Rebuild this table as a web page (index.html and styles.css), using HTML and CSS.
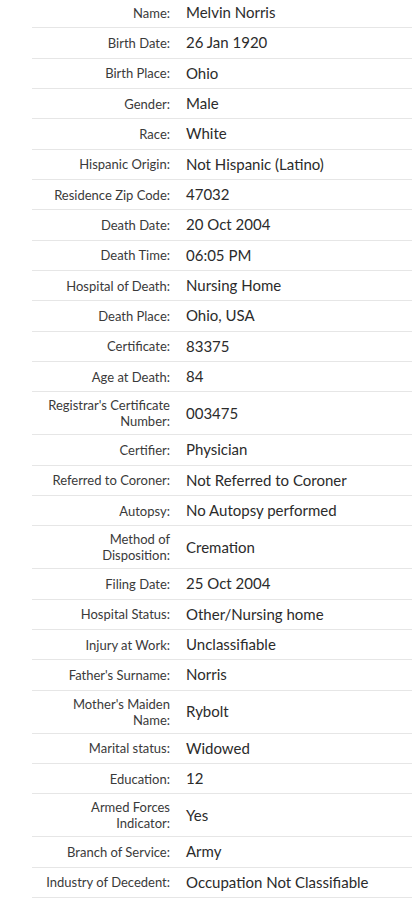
FILE: index.html
```html
<!DOCTYPE html>
<html lang="en">
<head>
    <meta charset="UTF-8">
    <meta name="viewport" content="width=device-width, initial-scale=1.0">
    <title>Death Record</title>
    <link rel="stylesheet" href="styles.css">
</head>
<body>
    <div class="record">
        <table class="record-table">
            <tr><td class="label">Name:</td><td class="value">Melvin Norris</td></tr>
            <tr><td class="label">Birth Date:</td><td class="value">26 Jan 1920</td></tr>
            <tr><td class="label">Birth Place:</td><td class="value">Ohio</td></tr>
            <tr><td class="label">Gender:</td><td class="value">Male</td></tr>
            <tr><td class="label">Race:</td><td class="value">White</td></tr>
            <tr><td class="label">Hispanic Origin:</td><td class="value">Not Hispanic (Latino)</td></tr>
            <tr><td class="label">Residence Zip Code:</td><td class="value">47032</td></tr>
            <tr><td class="label">Death Date:</td><td class="value">20 Oct 2004</td></tr>
            <tr><td class="label">Death Time:</td><td class="value">06:05 PM</td></tr>
            <tr><td class="label">Hospital of Death:</td><td class="value">Nursing Home</td></tr>
            <tr><td class="label">Death Place:</td><td class="value">Ohio, USA</td></tr>
            <tr><td class="label">Certificate:</td><td class="value">83375</td></tr>
            <tr><td class="label">Age at Death:</td><td class="value">84</td></tr>
            <tr><td class="label">Registrar's Certificate Number:</td><td class="value">003475</td></tr>
            <tr><td class="label">Certifier:</td><td class="value">Physician</td></tr>
            <tr><td class="label">Referred to Coroner:</td><td class="value">Not Referred to Coroner</td></tr>
            <tr><td class="label">Autopsy:</td><td class="value">No Autopsy performed</td></tr>
            <tr><td class="label">Method of Disposition:</td><td class="value">Cremation</td></tr>
            <tr><td class="label">Filing Date:</td><td class="value">25 Oct 2004</td></tr>
            <tr><td class="label">Hospital Status:</td><td class="value">Other/Nursing home</td></tr>
            <tr><td class="label">Injury at Work:</td><td class="value">Unclassifiable</td></tr>
            <tr><td class="label">Father's Surname:</td><td class="value">Norris</td></tr>
            <tr><td class="label">Mother's Maiden Name:</td><td class="value">Rybolt</td></tr>
            <tr><td class="label">Marital status:</td><td class="value">Widowed</td></tr>
            <tr><td class="label">Education:</td><td class="value">12</td></tr>
            <tr><td class="label">Armed Forces Indicator:</td><td class="value">Yes</td></tr>
            <tr><td class="label">Branch of Service:</td><td class="value">Army</td></tr>
            <tr><td class="label">Industry of Decedent:</td><td class="value">Occupation Not Classifiable</td></tr>
        </table>
    </div>
</body>
</html>
```

FILE: styles.css
```css
body {
    margin: 0;
    background: #fff;
    font-family: Lato, 'Liberation Sans', sans-serif;
    color: #333;
}

.record {
    padding-left: 32px;
    margin-top: -2px;
}

.record-table {
    width: 380px;
    border-collapse: collapse;
}

.record-table td {
    border-bottom: 1px solid #e6e6e6;
    padding: 5px 8px;
    vertical-align: middle;
}

.label {
    width: 130px;
    text-align: right;
    font-size: 13px;
    line-height: 16px;
    color: #3a3a3a;
}

.value {
    font-size: 15px;
    line-height: 19.33px;
    color: #2b2b2b;
}
```
